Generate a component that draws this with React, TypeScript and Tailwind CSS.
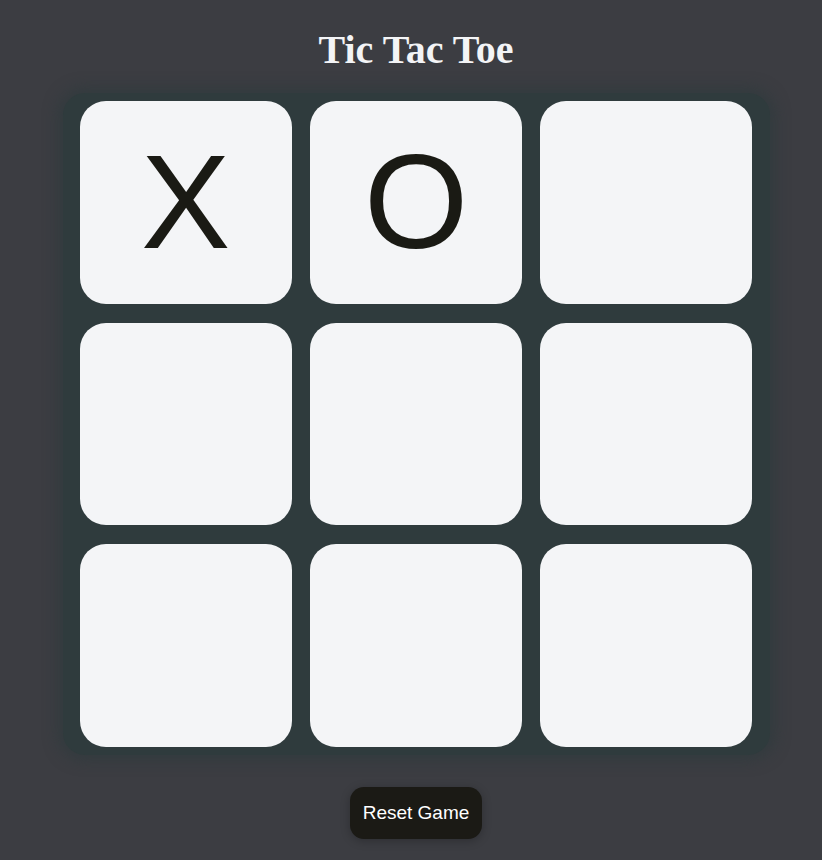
import React, { useState } from 'react';

type Mark = 'X' | 'O' | null;

const App: React.FC = () => {
  const [board, setBoard] = useState<Mark[]>(['X', 'O', null, null, null, null, null, null, null]);

  const play = (i: number) => {
    if (board[i]) return;
    const next = board.filter(Boolean).length % 2 === 0 ? 'X' : 'O';
    const copy = [...board];
    copy[i] = next;
    setBoard(copy);
  };

  return (
    <div className="min-h-[860px] w-full bg-[#3c3d42] flex flex-col items-center pl-[10px]">
      <h1 className="mt-[26px] text-[40px] leading-[48px] font-bold text-[#f3f4f6] font-['Liberation_Serif',serif]">
        Tic Tac Toe
      </h1>

      <div className="mt-[19px] w-[707px] h-[662px] bg-[#2f3b3d] rounded-[22px] shadow-[0_0_14px_6px_rgba(47,59,61,0.7)] grid grid-cols-3 grid-rows-3 gap-x-[18px] gap-y-[19px] px-[17px] py-[8px]">
        {board.map((cell, i) => (
          <button
            key={i}
            onClick={() => play(i)}
            className="min-h-0 bg-[#f4f5f7] rounded-[26px] flex items-center justify-center text-[134px] leading-none text-[#1a1a14] font-['Liberation_Sans',Arial,sans-serif]"
          >
            {cell}
          </button>
        ))}
      </div>

      <button
        onClick={() => setBoard([null, null, null, null, null, null, null, null, null])}
        className="mt-[32px] h-[52px] w-[132px] rounded-[14px] bg-[#1b1a15] text-white text-[19px] font-['Liberation_Sans',Arial,sans-serif] shadow-[0_2px_10px_rgba(0,0,0,0.25)]"
      >
        Reset Game
      </button>
    </div>
  );
};

export default App;
